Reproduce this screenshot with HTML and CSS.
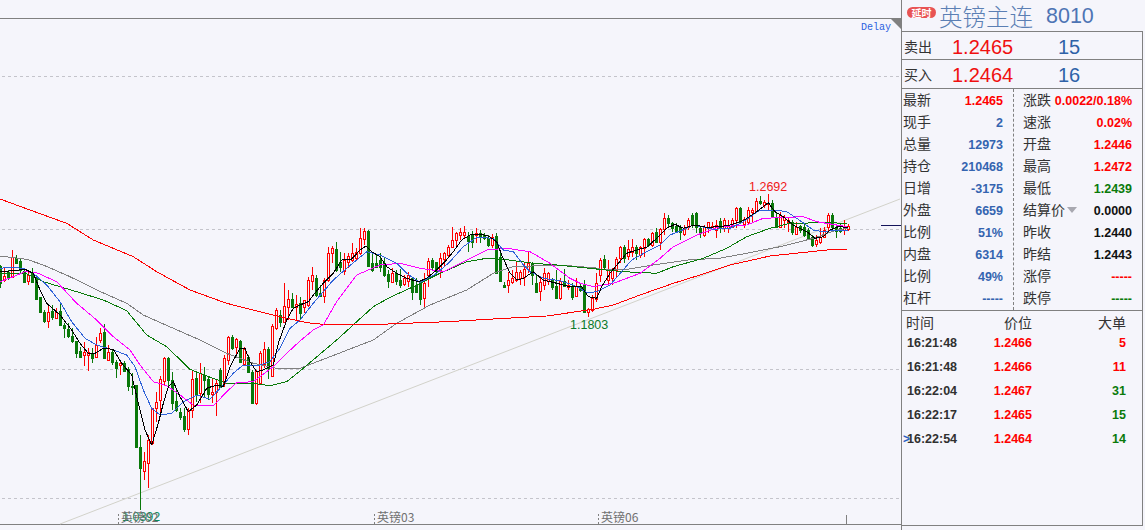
FILE: index.html
```html
<!DOCTYPE html>
<html lang="zh">
<head>
<meta charset="utf-8">
<title>英镑主连 8010</title>
<link rel="stylesheet" href="styles.css">
</head>
<body>
<div class="page">
  <main class="chart">
    <svg id="plot" class="plot" width="901" height="530" viewBox="0 0 901 530" xmlns="http://www.w3.org/2000/svg">
      <line class="axis" x1="0" y1="18.5" x2="901" y2="18.5"/>
      <line class="axis" x1="0" y1="524.5" x2="901" y2="524.5"/>
      <line class="grid" x1="2" y1="76.5" x2="900" y2="76.5"/>
      <line class="grid" x1="2" y1="229.5" x2="900" y2="229.5"/>
      <line class="grid" x1="2" y1="369.5" x2="900" y2="369.5"/>
      <line class="grid" x1="2" y1="498.5" x2="900" y2="498.5"/>
      <line class="trend" x1="60" y1="524" x2="900" y2="199"/>
      <polygon class="corner" points="891,19 901,19 901,29"/>
      <line class="tick" x1="118.5" y1="514" x2="118.5" y2="524"/>
      <line class="tick" x1="374.5" y1="514" x2="374.5" y2="524"/>
      <line class="tick" x1="598.5" y1="514" x2="598.5" y2="524"/>
      <line class="tick-solid" x1="846.5" y1="515" x2="846.5" y2="524"/>
      <line class="cursor" x1="881" y1="225.5" x2="901" y2="225.5"/>
    </svg>
    <span class="delay">Delay</span>
    <span class="peak label-high">1.2692</span>
    <span class="peak label-low">1.1803</span>
    <span class="peak label-min">1.0392</span>
    <span class="tag tag-a">英镑02</span>
    <span class="tag tag-b">英镑03</span>
    <span class="tag tag-c">英镑06</span>
  </main>
  <aside class="side">
    <header class="title">
      <span class="badge">延时</span>
      <span class="name">英镑主连</span>
      <span class="code">8010</span>
    </header>
    <div class="box">
      <div class="quote">
        <span class="q-label">卖出</span><span class="q-price">1.2465</span><span class="q-vol">15</span>
      </div>
      <div class="quote quote-tall">
        <span class="q-label">买入</span><span class="q-price">1.2464</span><span class="q-vol">16</span>
      </div>
      <section class="stats">
        <div class="col col-left">
          <div class="row"><span>最新</span><b class="red">1.2465</b></div>
          <div class="row"><span>现手</span><b class="blue">2</b></div>
          <div class="row"><span>总量</span><b class="blue">12973</b></div>
          <div class="row"><span>持仓</span><b class="blue">210468</b></div>
          <div class="row"><span>日增</span><b class="blue">-3175</b></div>
          <div class="row"><span>外盘</span><b class="blue">6659</b></div>
          <div class="row"><span>比例</span><b class="blue">51%</b></div>
          <div class="row"><span>内盘</span><b class="blue">6314</b></div>
          <div class="row"><span>比例</span><b class="blue">49%</b></div>
          <div class="row"><span>杠杆</span><b class="blue">-----</b></div>
        </div>
        <div class="col col-right">
          <div class="row"><span>涨跌</span><b class="red">0.0022/0.18%</b></div>
          <div class="row"><span>速涨</span><b class="red">0.02%</b></div>
          <div class="row"><span>开盘</span><b class="red">1.2446</b></div>
          <div class="row"><span>最高</span><b class="red">1.2472</b></div>
          <div class="row"><span>最低</span><b class="green">1.2439</b></div>
          <div class="row"><span class="with-arrow">结算价<i class="arrow"></i></span><b class="black">0.0000</b></div>
          <div class="row"><span>昨收</span><b class="black">1.2440</b></div>
          <div class="row"><span>昨结</span><b class="black">1.2443</b></div>
          <div class="row"><span>涨停</span><b class="red">-----</b></div>
          <div class="row"><span>跌停</span><b class="green">-----</b></div>
        </div>
      </section>
      <section class="trades">
        <div class="t-head"><span>时间</span><span class="right">价位</span><span class="right">大单</span></div>
        <div class="t-row"><b class="time">16:21:48</b><b class="red right">1.2466</b><b class="red right">5</b></div>
        <div class="t-row"><b class="time">16:21:48</b><b class="red right">1.2466</b><b class="red right">11</b></div>
        <div class="t-row"><b class="time">16:22:04</b><b class="red right">1.2467</b><b class="green right">31</b></div>
        <div class="t-row"><b class="time">16:22:17</b><b class="red right">1.2465</b><b class="green right">15</b></div>
        <div class="t-row"><b class="time"><i class="pointer">&gt;</i>16:22:54</b><b class="red right">1.2464</b><b class="green right">14</b></div>
      </section>
    </div>
  </aside>
</div>
<script src="chart.js"></script>
</body>
</html>
```
FILE: styles.css
```css
* { box-sizing: border-box; }
html, body { margin: 0; height: 100%; background: #f5f5fb; overflow: hidden; }
body { font-family: "Liberation Sans", "Noto Sans CJK SC", sans-serif; }
.page { display: flex; width: 1145px; height: 530px; background: #f5f5fb; }

/* chart */
.chart { position: relative; width: 901px; height: 530px; flex: none; }
.plot { display: block; }
.axis { stroke: #808080; stroke-width: 1; }
.grid { stroke: #c4c4cb; stroke-width: 1; stroke-dasharray: 3 3; }
.trend { stroke: #d2d2ca; stroke-width: 1; }
.corner { fill: #808080; }
.tick { stroke: #808080; stroke-width: 1; stroke-dasharray: 2 2; }
.tick-solid { stroke: #808080; stroke-width: 1; }
.cursor { stroke: #14145a; stroke-width: 1; }
.ma { fill: none; stroke-width: 1; stroke-linejoin: round; shape-rendering: crispEdges; }
.ma-black { stroke: #000; }
.ma-blue { stroke: #2f62d8; }
.ma-magenta { stroke: #ff00ff; }
.ma-green { stroke: #0a7a0a; }
.ma-gray { stroke: #808080; }
.ma-red { stroke: #ff0000; }
.wick-up { stroke: #ff0000; }
.wick-down { stroke: #0a780a; }
.body-up { fill: #f5f5fb; stroke: #ff0000; }
.body-down { fill: #0a780a; stroke: #0a780a; }
.delay { position: absolute; left: 861px; top: 21px; margin-top: 0; font: 10px/14px "Liberation Mono", monospace; color: #2a5fe0; }
.peak { position: absolute; font-size: 12.5px; line-height: 14px; }
.label-high { left: 749px; top: 180px; color: #f01818; }
.label-low { left: 570px; top: 318px; color: #0a7a2a; }
.label-min { left: 122px; top: 510px; color: #0a8a5a; }
.tag { position: absolute; top: 510px; font: 12px/14px "Noto Sans CJK SC", sans-serif; color: #707070; white-space: nowrap; }
.tag-a { left: 121px; }
.tag-b { left: 377px; }
.tag-c { left: 601px; }

/* side panel */
.side { width: 242px; height: 530px; flex: none; border-left: 1px solid #808080; display: flex; flex-direction: column; }
.title { height: 31px; flex: none; display: flex; align-items: center; padding-left: 5px; }
.badge { width: 29px; height: 11px; margin-top: -6px; border-radius: 6px; background: #e85454; color: #fff; font: bold 10px/11px "Noto Sans CJK SC", sans-serif; text-align: center; }
.name { margin-left: 3px; font: 23.5px/30px "Noto Sans CJK SC", sans-serif; color: #5b7fb4; font-weight: 300; }
.code { margin-left: 13px; font: 21.5px/30px "Liberation Sans", sans-serif; color: #4d74b4; }
.box { height: 495px; flex: none; border: 1px solid #808080; border-left: 0; display: flex; flex-direction: column; }
.quote { height: 28px; flex: none; display: flex; align-items: center; border-bottom: 1px solid #808080; padding-left: 2px; }
.quote-tall { height: 29px; }
.q-label { width: 48px; font: 14px/20px "Noto Sans CJK SC", sans-serif; color: #333; }
.q-price { width: 106px; padding-top: 3px; font-size: 20px; color: #f01010; }
.q-vol { padding-top: 3px; font-size: 20px; color: #2e62a8; }
.stats { display: grid; grid-template-columns: 112px 1fr; height: 222px; flex: none; border-bottom: 1px solid #808080; }
.col { display: flex; flex-direction: column; padding-top: 1px; }
.col-left { border-right: 1px dashed #808080; padding: 1px 10px 0 1px; }
.col-right { padding: 1px 10px 0 9px; }
.row { height: 22px; display: flex; justify-content: space-between; align-items: center; font: 14px/22px "Noto Sans CJK SC", sans-serif; color: #333; }
.row > span { padding-bottom: 5px; }
.row b, .t-row b { font: bold 12.5px/22px "Liberation Sans", sans-serif; }
.with-arrow { display: flex; align-items: center; }
.arrow { width: 0; height: 0; margin-left: 2px; margin-top: 3px; border: 5px solid transparent; border-top: 6px solid #a8a8b0; border-bottom: 0; }
.red { color: #ff0000; }
.blue { color: #3464b0; }
.green { color: #0a7a0a; }
.black { color: #101010; }
.trades { flex: 1; padding-left: 4px; padding-right: 16px; }
.t-head { display: grid; grid-template-columns: 46px 80px 1fr; height: 20px; font: 14px/22px "Noto Sans CJK SC", sans-serif; color: #333; }
.t-row { display: grid; grid-template-columns: 46px 80px 1fr; height: 24px; align-items: center; }
.t-row b { line-height: 24px; white-space: nowrap; }
.time { color: #303030; padding-left: 1px; position: relative; }
.pointer { position: absolute; left: -3px; top: 0; font: bold 12px/24px "Liberation Sans", sans-serif; color: #2a5fc0; }
.right { text-align: right; }
```
FILE: chart.js
```js
(function () {
  var NS = 'http://www.w3.org/2000/svg';
  var svg = document.getElementById('plot');

  function el(name, attrs) {
    var n = document.createElementNS(NS, name);
    for (var k in attrs) n.setAttribute(k, attrs[k]);
    svg.appendChild(n);
    return n;
  }

  // Each block: first candle index, y origin, and candles "type top,bottom,high,low" at 3x scale.
  var blocks = [
    [0, 240, 'G78,130,75,145 R108,120,85,125 G95,115,90,120 R52,112,30,115 G55,68,45,70 G62,90,55,100 G92,125,85,125 R105,122,90,135 G100,125,85,130 G120,178,110,180 G172,215,172,217 G215,243,210,250 R215,243,195,263 G212,230,195,240 R215,233,203,235 G213,255,185,258 G255,265,250,293 G268,288,248,295 G288,304,265,310 G304,338,304,353 G333,350,320,355 R335,345,307,378 R335,345,325,392 G340,355,325,370 R315,352,290,355 R278,300,265,310 G275,355,252,358 R335,360,315,362 G335,367,328,375 G365,385,360,415 R370,375,365,405 G368,392,362,395 G388,438,380,452 G438,442,400,465 G435,622,435,622 G620,685,585,810 R663,692,635,720 R600,668,585,745 R505,610,505,615 R487,505,455,545 R417,480,407,520 R353,422,350,435 G355,420,350,445 G420,488,395,510 G483,510,450,515 G515,530,505,540 G528,568,505,575 R510,566,505,585 R417,510,392,535 G415,465,395,485 R400,460,368,490 G405,420,380,470 G418,462,408,480 R455,462,415,490 R428,455,420,527 G390,440,385,445 R353,430,345,440 R292,360,288,375 G290,325,285,330 R297,320,295,345 G303,365,300,370 R327,373,320,378 G350,395,345,397 G395,490,390,492 R392,488,390,495 R340,430,332,435 R328,372,305,385 G327,385,320,418 R258,408,252,410 R210,263,205,270 G225,245,210,262 R198,245,130,250 R178,200,150,240 G178,202,160,205 R193,200,165,240'],
    [75, 210, 'G280,310,260,330 R270,290,270,310 R210,285,200,290 R195,213,170,240 G205,255,195,260 G250,258,225,262 R210,258,205,280 R130,210,110,215 R115,130,108,160 G118,180,95,185 G155,172,125,185 R150,182,130,195 R138,155,130,175 R130,150,100,155 R125,145,115,150 R85,130,55,135 R62,88,55,105 G62,168,60,172 G160,180,130,185 G160,170,135,175 G150,170,130,185 G160,195,145,200 G192,212,180,235 R190,215,175,220 G190,212,180,225 G210,225,178,235 R205,222,195,228 R195,212,185,230 G205,245,200,270 G225,245,205,250 G218,268,212,285 R218,265,190,298 R152,195,145,230 G150,172,145,180 G155,182,155,195 R145,182,130,205 R130,148,125,170 R110,135,105,145 R90,112,52,115 R70,90,65,115 R65,75,55,90 R65,75,48,85 G78,92,65,125 G75,95,62,115 R68,75,55,100 G68,80,60,100 G75,85,70,90 G85,105,75,110 R82,105,72,115 G78,188,70,190 G140,212,130,215 G225,230,215,235 R210,225,185,250 R205,215,180,222 R185,210,155,215 R185,205,180,225 R178,200,155,228 R160,178,125,190 G160,195,155,225 G220,245,195,250 R215,243,200,272 R190,225,175,240 R190,212,185,225 G210,232,205,240 G228,265,180,268 R212,265,205,270 G212,228,178,232 R225,232,210,240 G228,262,220,270 R228,258,205,262 G228,240,222,245 G225,305,210,310'],
    [147, 170, 'R418,425,415,440 R385,420,375,425 R340,387,310,395 R270,315,265,335 G268,290,255,300 R300,330,270,345 R300,325,295,345 R268,300,262,320 R230,265,228,280 G230,265,225,280 R238,258,210,270 R230,245,208,260 G230,250,225,270 R232,255,228,265 R208,235,205,260 G208,225,205,230 R188,225,185,230 G185,215,175,220 R178,215,175,240 R145,178,130,195 G143,160,135,175 G158,175,155,185 G168,182,160,190 G170,185,165,210 R178,192,165,198 R150,172,145,180 G135,165,130,175 G130,170,125,190 G175,190,170,205 R170,195,165,200 R155,175,155,190 R168,178,155,180 R165,180,150,205 G152,175,145,190 R150,175,145,185 R165,175,150,190 R150,170,145,175 R115,150,110,175 G115,155,110,160 R148,162,140,175 R120,155,112,165 R120,125,115,155 R92,122,85,130 G92,100,78,105 R95,105,90,115 R98,103,72,120 G100,140,90,145 G140,172,125,175 R135,172,125,175 R140,150,135,175 R150,155,140,185 G155,185,150,195 R172,192,155,195 G168,180,165,190 G172,195,160,200 G180,205,175,205 G200,225,195,230 R210,222,195,230 R200,215,175,222 R180,200,170,205 R135,170,130,190 G135,170,130,180 G170,182,165,205 G175,182,160,190 R170,180,150,195 R168,178,163,182']
  ];

  var snap = function (v) { return Math.round(v) + 0.5; };
  var group = el('g', { 'shape-rendering': 'crispEdges' });

  function add(name, attrs) {
    var n = document.createElementNS(NS, name);
    for (var k in attrs) n.setAttribute(k, attrs[k]);
    group.appendChild(n);
  }

  blocks.forEach(function (block) {
    block[2].split(' ').forEach(function (item, offset) {
      var up = item.charAt(0) === 'R';
      var v = item.slice(1).split(',').map(function (z) { return block[1] + Number(z) / 3; });
      var x = 4 * (block[0] + offset) + 0.5;
      var top = snap(v[0]);
      var bottom = Math.max(snap(v[1]), top + 1);
      var cls = up ? 'up' : 'down';
      if (v[2] < v[0]) add('line', { 'class': 'wick-' + cls, x1: x, x2: x, y1: Math.round(v[2]), y2: top });
      if (v[3] > v[1]) add('line', { 'class': 'wick-' + cls, x1: x, x2: x, y1: bottom, y2: Math.round(v[3]) });
      add('rect', { 'class': 'body-' + cls, x: x - 1, y: top, width: 2, height: bottom - top });
    });
  });

  // Moving averages: "color", then runs of [x origin, y origin, 3x-scale points].
  var lines = [
    ['gray', [[0, 240, '0,48 80,58 130,75 210,110 290,150 380,190 430,225 520,265 600,300 680,340 760,370 830,385 900,385'], [280, 210, '280,390 350,340 450,285 560,240 640,190 700,170 840,165 960,175'], [580, 170, '30,296 130,300 220,285 340,268 410,266 500,250 600,230 700,205 770,180 805,175']]],
    ['green', [[0, 240, '0,100 80,102 130,125 230,155 310,180 380,212 440,285 500,320 570,388 620,408 680,430 760,430 810,437 860,425 900,393'], [280, 210, '170,390 230,335 280,290 330,262 400,230 480,190 560,155 620,145 670,148 760,160 830,165 960,178'], [580, 170, '40,296 130,305 230,310 280,290 370,265 440,235 500,200 570,175 630,160 740,158 800,160']]],
    ['red', [[0, 0, '0,597 90,630 200,670 280,720 400,770 470,815 570,870 680,910 780,935'], [280, 210, '0,320 80,338 130,343 300,343 500,335 640,327 800,318'], [580, 170, '40,418 100,405 180,375 280,340 360,315 450,285 570,258 740,240 802,238']]],
    ['magenta', [[0, 240, '0,125 40,110 75,95 110,98 170,125 230,190 290,240 340,290 390,330 420,375 460,425 500,437 540,465 580,495 640,498 680,455 710,428 760,425 820,380 860,340 900,303'], [280, 210, '100,360 130,345 170,275 230,195 300,165 360,160 420,175 490,185 550,155 620,120 680,115 750,125 810,160 870,205'], [580, 170, '0,340 40,350 100,340 180,310 240,265 280,230 350,195 420,170 500,165 550,145 670,140 710,155 800,170']]],
    ['blue', [[0, 240, '0,85 30,82 70,85 100,100 140,135 180,185 215,245 255,295 290,315 340,330 380,345 405,380 430,450 455,505 480,525 515,520 550,485 590,465 630,478 660,445 700,400 730,375 780,375 810,365 840,325 870,265 900,240'], [280, 210, '100,280 130,245 160,210 200,175 230,150 260,125 300,135 350,160 380,190 420,218 470,190 510,155 550,110 590,82 640,85 670,120 700,125 730,165 750,185 790,205 840,212 880,225'], [580, 170, '0,355 20,368 50,365 90,345 125,305 155,270 200,245 240,225 270,195 320,175 340,165 400,178 450,175 490,155 540,120 585,120 620,125 650,145 700,180 730,185 770,180 805,180']]],
    ['black', [[0, 240, '0,95 40,92 75,88 100,100 120,150 140,190 180,225 215,270 240,310 265,340 285,340 310,325 340,328 365,370 395,405 415,490 435,570 455,615 475,550 490,490 505,440 520,425 540,470 565,515 590,495 620,445 650,435 670,440 690,380 720,325 735,325 750,365 770,395 790,390 820,375 835,310 860,240 880,205 900,195'], [280, 210, '85,275 100,255 130,220 160,190 185,150 215,147 240,120 258,108 275,125 300,140 320,170 350,190 380,205 415,215 440,205 470,180 495,155 520,125 545,90 570,75 600,72 625,78 650,95 665,135 690,190 710,210 730,205 760,185 790,210 830,220 870,230'], [580, 170, '5,350 25,380 50,385 65,350 90,310 115,280 140,250 170,240 200,232 230,205 260,175 285,163 310,175 345,165 380,172 420,170 450,165 490,152 530,125 565,98 585,125 610,140 640,165 680,185 705,205 730,200 750,180 775,170 805,172']]]
  ];

  lines.forEach(function (line) {
    var pts = [];
    line[1].forEach(function (run) {
      run[2].split(' ').forEach(function (p) {
        var xy = p.split(',');
        pts.push((run[0] + xy[0] / 3).toFixed(1) + ',' + (run[1] + xy[1] / 3).toFixed(1));
      });
    });
    el('polyline', { 'class': 'ma ma-' + line[0], points: pts.join(' ') });
  });
})();
```
